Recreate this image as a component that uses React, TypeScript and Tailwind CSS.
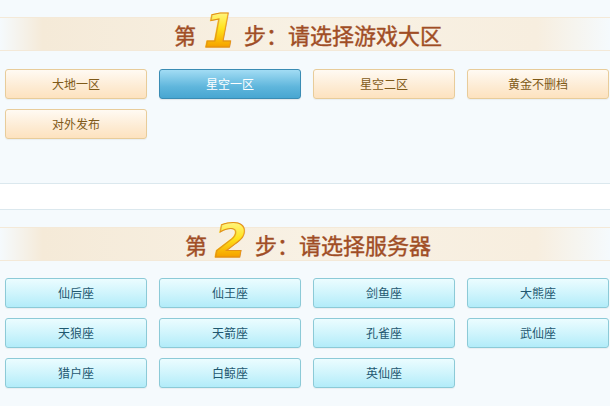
import React from "react";

const zones = ["大地一区", "星空一区", "星空二区", "黄金不删档", "对外发布"];
const servers = ["仙后座", "仙王座", "剑鱼座", "大熊座", "天狼座", "天箭座", "孔雀座", "武仙座", "猎户座", "白鲸座", "英仙座"];

function Header({ num, text }: { num: string; text: string }) {
  return (
    <div className="relative h-[34px] bg-[linear-gradient(to_right,rgba(246,236,220,0)_0%,#f5ead8_7%,#f8f1e4_50%,#f7eedf_88%,rgba(246,236,220,0)_100%)] border-y border-[#f4e9d8] flex items-center justify-center">
      <div className="flex items-center pl-[6px] text-[22px] leading-none text-[#a04d25] font-normal [-webkit-text-stroke:0.4px_#a04d25] [font-family:'Noto_Sans_CJK_SC',sans-serif]">
        <span>第</span>
        <span className="mx-[8px] -mt-[6px] text-[46px] leading-none font-bold italic [font-family:'DejaVu_Sans',sans-serif] bg-[linear-gradient(to_bottom,#fffb9c_0%,#ffe21a_45%,#f7a800_80%,#ea7c00_100%)] bg-clip-text text-transparent [-webkit-text-stroke:1px_#e2921a]">
          {num}
        </span>
        <span>{text}</span>
      </div>
    </div>
  );
}

export default function App() {
  return (
    <div className="w-[610px] h-[406px] overflow-hidden bg-[#f5fafd] [font-family:'Noto_Sans_CJK_SC',sans-serif]">
      <div className="pt-[17px] h-[183px]">
        <Header num="1" text="步：请选择游戏大区" />
        <div className="mt-[18px] pl-[5px] grid grid-cols-[repeat(4,142px)] gap-x-[12px] gap-y-[10px]">
          {zones.map((z, i) =>
            i === 1 ? (
              <div key={z} className="h-[30px] rounded-[3px] border border-[#3a8cb4] bg-[linear-gradient(to_bottom,#a2dcf4,#5fb6dc_60%,#48a6d1)] flex items-center justify-center text-[12px] text-white shadow-[0_1px_1px_rgba(0,0,0,0.08)]">
                {z}
              </div>
            ) : (
              <div key={z} className="h-[30px] rounded-[3px] border border-[#e8cc9a] bg-[linear-gradient(to_bottom,#fffaf3,#fdebd3_60%,#fde2bf)] flex items-center justify-center text-[12px] text-[#7f5a18] shadow-[0_1px_1px_rgba(0,0,0,0.05)]">
                {z}
              </div>
            )
          )}
        </div>
      </div>
      <div className="h-[27px] bg-white border-y border-[#dbe8ee]" />
      <div className="pt-[17px]">
        <Header num="2" text="步：请选择服务器" />
        <div className="mt-[17px] pl-[5px] grid grid-cols-[repeat(4,142px)] gap-x-[12px] gap-y-[10px]">
          {servers.map((s) => (
            <div key={s} className="h-[30px] rounded-[3px] border border-[#8ccad7] bg-[linear-gradient(to_bottom,#ebfcff,#cdf4fc_55%,#b2ecf9)] flex items-center justify-center text-[12px] text-[#1f5870] shadow-[0_1px_1px_rgba(0,0,0,0.05)]">
              {s}
            </div>
          ))}
        </div>
      </div>
    </div>
  );
}
